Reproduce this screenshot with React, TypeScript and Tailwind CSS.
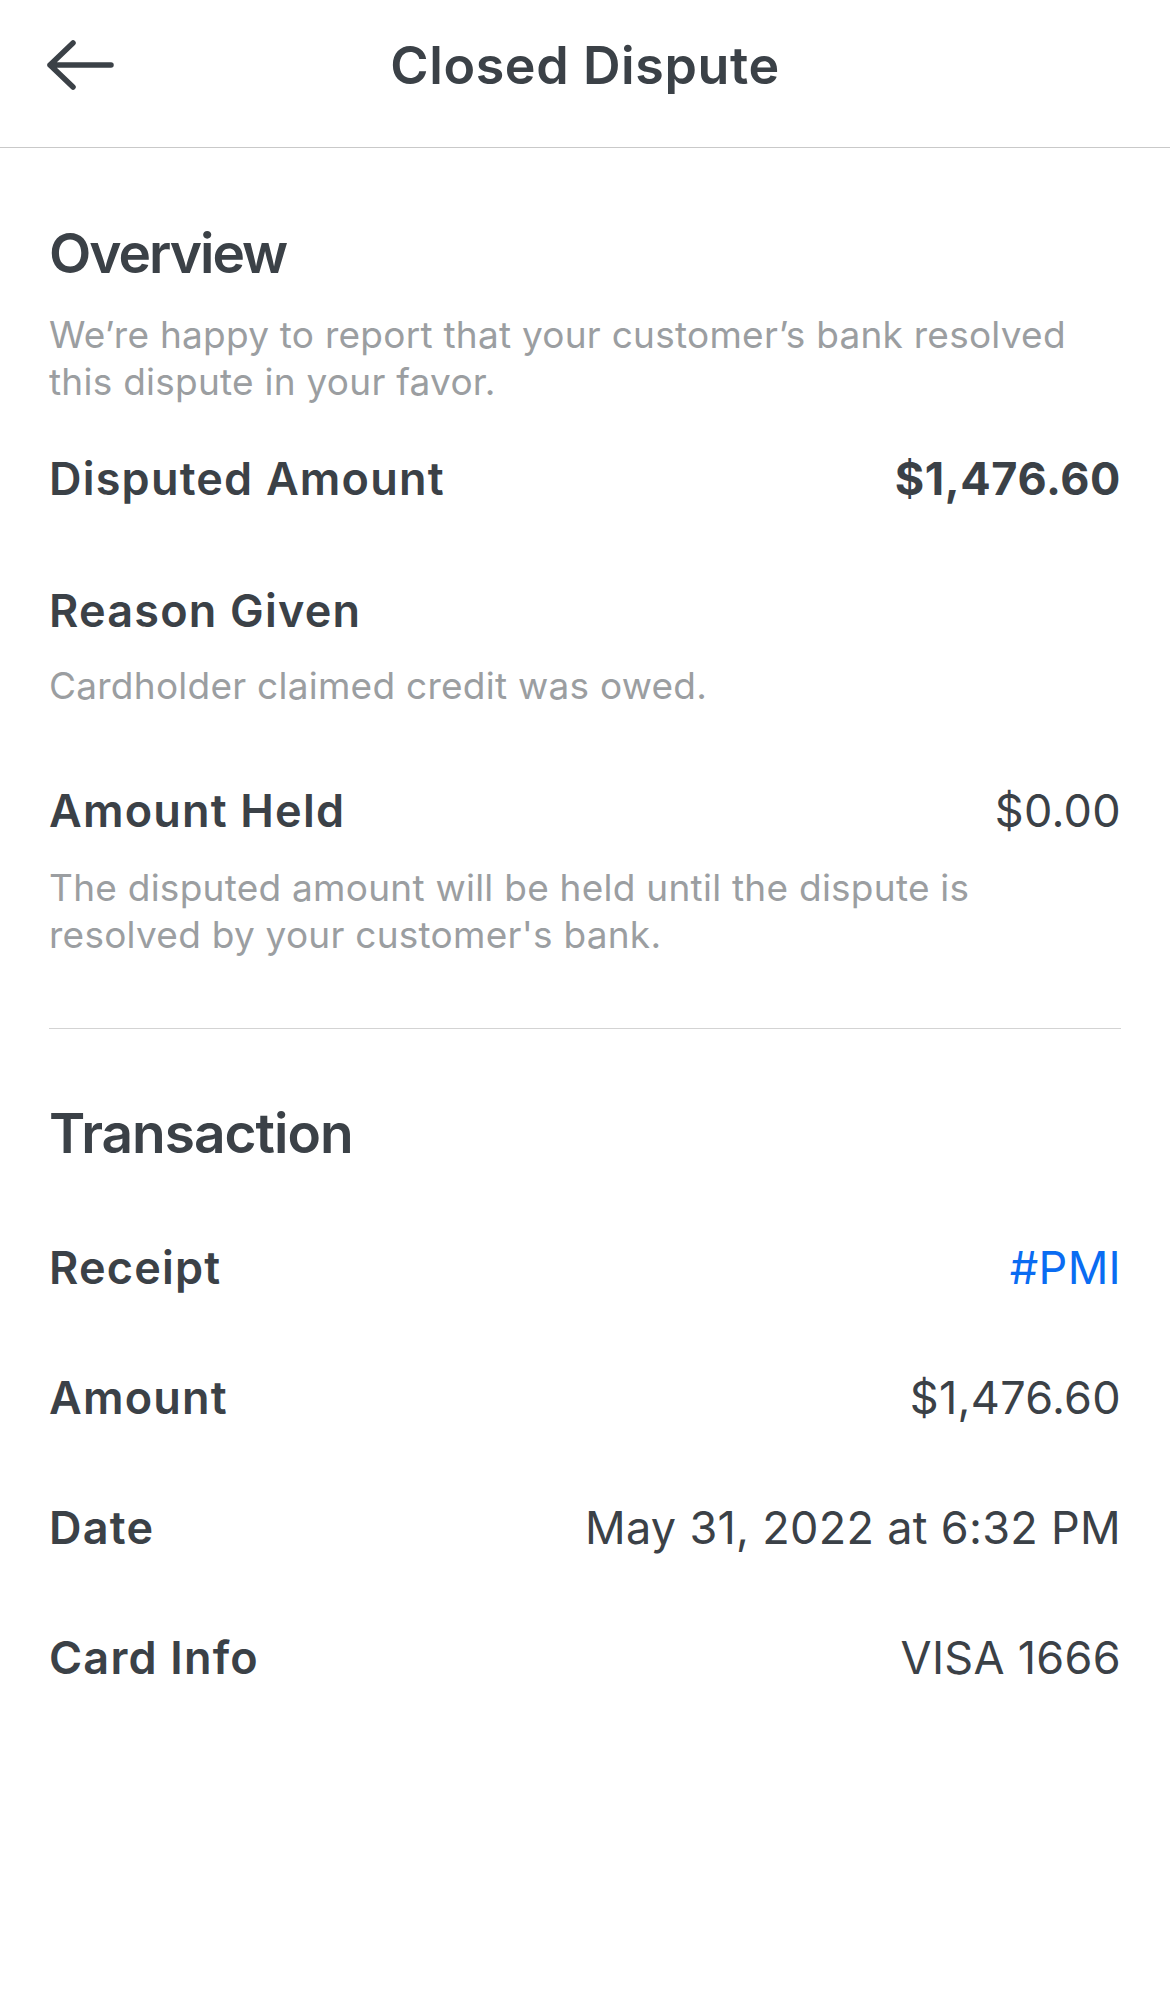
import React from "react";

const font = { fontFamily: "Inter, 'Noto Sans', sans-serif" };

const BackArrow = () => (
  <svg width="72" height="56" viewBox="0 0 72 56" fill="none" className="text-[#3b4147]">
    <path d="M4 28h61M4 28L27 6M4 28l23 22" stroke="currentColor" strokeWidth="5.5" strokeLinecap="round" strokeLinejoin="round" />
  </svg>
);

const Row = ({ label, value, valueClass = "" }: { label: string; value: string; valueClass?: string }) => (
  <div className="flex items-center justify-between h-[52px] leading-[52px] text-[45px]">
    <span className="font-semibold text-[#3b4147] tracking-[1.2px]">{label}</span>
    <span className={valueClass || "font-normal text-[#3b4147] tracking-[0.3px]"}>{value}</span>
  </div>
);

export default function App() {
  return (
    <div className="w-[1170px] h-[2015px] bg-white" style={font}>
      {/* Header */}
      <header className="h-[148px] border-b border-[#c9c9c9]">
        <div className="relative h-[132px] flex items-center justify-center">
          <button className="absolute left-[46px] top-[37px]">
            <BackArrow />
          </button>
          <h1 className="text-[52px] leading-[62px] font-semibold text-[#3b4147] tracking-[0.6px]">Closed Dispute</h1>
        </div>
      </header>

      <main className="px-[49px]">
        {/* Overview */}
        <section className="pt-[72px]">
          <h2 className="text-[55px] leading-[66px] font-semibold text-[#3b4147] tracking-[-2px]">Overview</h2>
          <p className="mt-[25px] text-[37px] leading-[47px] text-[#9b9ea1] tracking-[0.25px]">
            We’re happy to report that your customer’s bank resolved this dispute in your favor.
          </p>

          <div className="mt-[48px]">
            <Row label="Disputed Amount" value="$1,476.60" valueClass="font-bold text-[#3b4147] tracking-[0.6px]" />
          </div>

          <div className="mt-[80px] h-[52px] leading-[52px] text-[45px] font-semibold text-[#3b4147] tracking-[1.2px]">
            Reason Given
          </div>
          <p className="mt-[25px] text-[37px] leading-[47px] text-[#9b9ea1] tracking-[0.25px]">
            Cardholder claimed credit was owed.
          </p>

          <div className="mt-[76px]">
            <Row label="Amount Held" value="$0.00" />
          </div>
          <p className="mt-[27px] text-[37px] leading-[47px] text-[#9b9ea1] tracking-[0.25px] pr-[100px]">
            The disputed amount will be held until the dispute is resolved by your customer's bank.
          </p>
        </section>

        <div className="mt-[70px] h-px bg-[#d3d3d3]" />

        {/* Transaction */}
        <section className="pt-[71px]">
          <h2 className="text-[55px] leading-[66px] font-semibold text-[#3b4147] tracking-[-1px]">Transaction</h2>
          <div className="mt-[76px] flex flex-col gap-[78px]">
            <Row label="Receipt" value="#PMI" valueClass="font-normal text-[#0a6cf2] tracking-[0.3px]" />
            <Row label="Amount" value="$1,476.60" />
            <Row label="Date" value="May 31, 2022 at 6:32 PM" />
            <Row label="Card Info" value="VISA 1666" />
          </div>
        </section>
      </main>
    </div>
  );
}
